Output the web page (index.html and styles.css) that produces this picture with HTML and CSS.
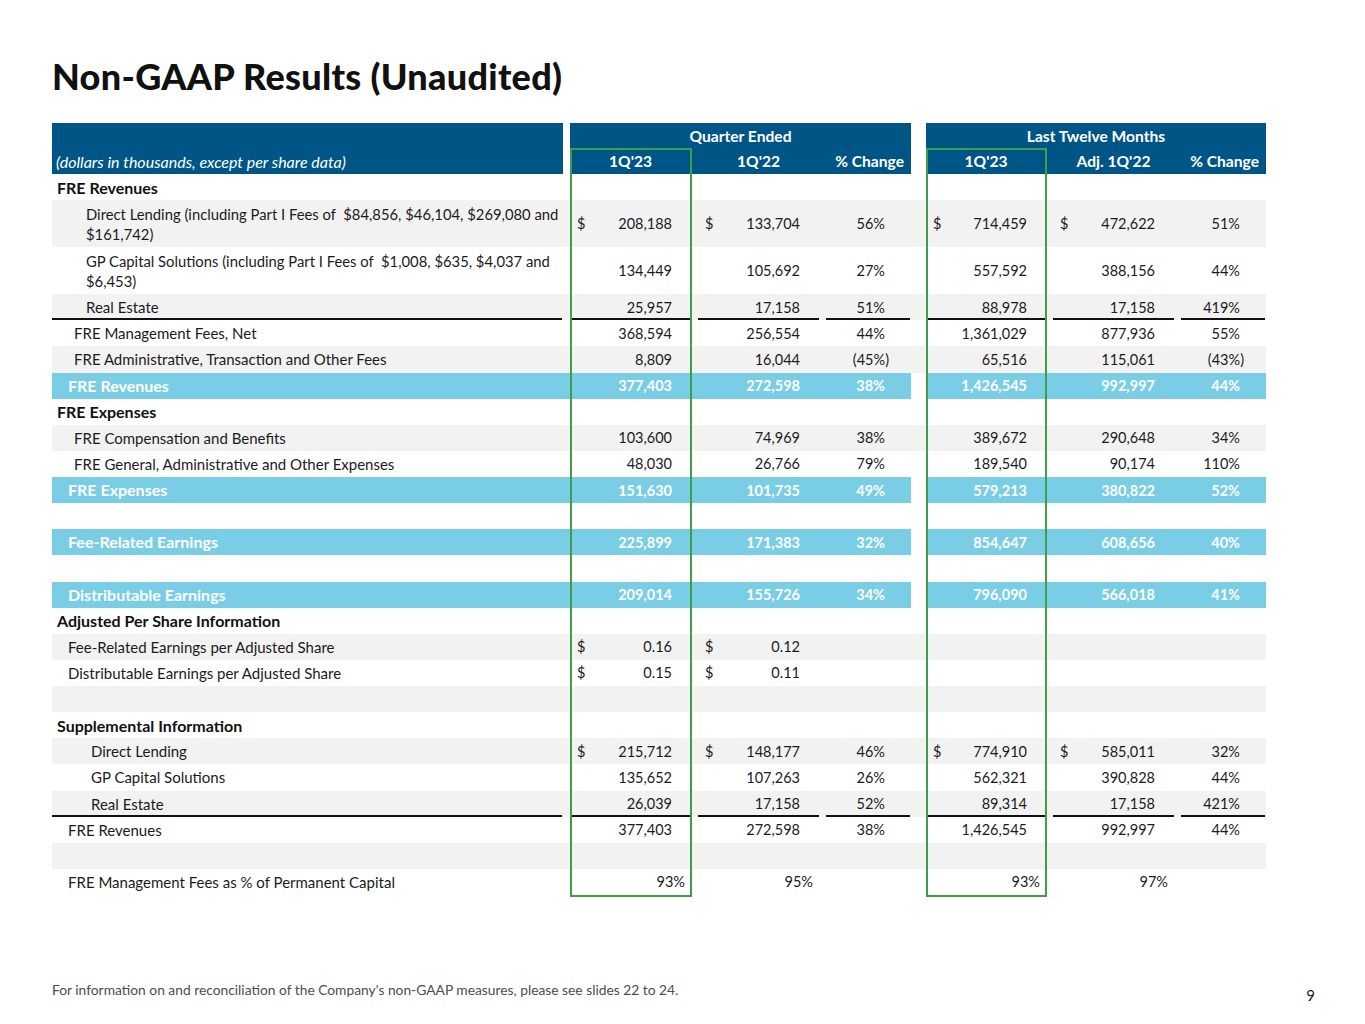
FILE: index.html
```html
<!DOCTYPE html>
<html lang="en">
<head>
<meta charset="utf-8">
<title>Non-GAAP Results (Unaudited)</title>
<link rel="stylesheet" href="styles.css">
</head>
<body>
<div class="slide">
  <h1 class="title">Non-GAAP Results (Unaudited)</h1>

  <div class="table">
    <div class="head">
      <div class="h-lab"><span class="note">(dollars in thousands, except per share data)</span></div>
      <div class="h-group g1">Quarter Ended</div>
      <div class="h-group g2">Last Twelve Months</div>
      <div class="h-col c1">1Q'23</div>
      <div class="h-col c2">1Q'22</div>
      <div class="h-col c3 pct">% Change</div>
      <div class="h-col c5">1Q'23</div>
      <div class="h-col c6">Adj. 1Q'22</div>
      <div class="h-col c7 pct">% Change</div>
    </div>

    <div class="row sec"><div class="lab i0">FRE Revenues</div><div class="n"></div><div class="n"></div><div class="p"></div><div class="sp"></div><div class="n"></div><div class="n"></div><div class="p"></div></div>

    <div class="row gray tall"><div class="lab i3">Direct Lending (including Part I Fees of &nbsp;$84,856, $46,104, $269,080 and<br>$161,742)</div><div class="n"><span class="cur">$</span>208,188</div><div class="n"><span class="cur">$</span>133,704</div><div class="p">56%</div><div class="sp"></div><div class="n"><span class="cur">$</span>714,459</div><div class="n"><span class="cur">$</span>472,622</div><div class="p">51%</div></div>

    <div class="row tall"><div class="lab i3">GP Capital Solutions (including Part I Fees of &nbsp;$1,008, $635, $4,037 and<br>$6,453)</div><div class="n">134,449</div><div class="n">105,692</div><div class="p">27%</div><div class="sp"></div><div class="n">557,592</div><div class="n">388,156</div><div class="p">44%</div></div>

    <div class="row gray ul"><div class="lab i3">Real Estate</div><div class="n">25,957</div><div class="n">17,158</div><div class="p">51%</div><div class="sp"></div><div class="n">88,978</div><div class="n">17,158</div><div class="p">419%</div></div>

    <div class="row"><div class="lab i2">FRE Management Fees, Net</div><div class="n">368,594</div><div class="n">256,554</div><div class="p">44%</div><div class="sp"></div><div class="n">1,361,029</div><div class="n">877,936</div><div class="p">55%</div></div>

    <div class="row gray"><div class="lab i2">FRE Administrative, Transaction and Other Fees</div><div class="n">8,809</div><div class="n">16,044</div><div class="p neg">(45%)</div><div class="sp"></div><div class="n">65,516</div><div class="n">115,061</div><div class="p neg">(43%)</div></div>

    <div class="row blue"><div class="lab i1">FRE Revenues</div><div class="n">377,403</div><div class="n">272,598</div><div class="p">38%</div><div class="sp"></div><div class="n">1,426,545</div><div class="n">992,997</div><div class="p">44%</div></div>

    <div class="row sec"><div class="lab i0">FRE Expenses</div><div class="n"></div><div class="n"></div><div class="p"></div><div class="sp"></div><div class="n"></div><div class="n"></div><div class="p"></div></div>

    <div class="row gray"><div class="lab i2">FRE Compensation and Benefits</div><div class="n">103,600</div><div class="n">74,969</div><div class="p">38%</div><div class="sp"></div><div class="n">389,672</div><div class="n">290,648</div><div class="p">34%</div></div>

    <div class="row"><div class="lab i2">FRE General, Administrative and Other Expenses</div><div class="n">48,030</div><div class="n">26,766</div><div class="p">79%</div><div class="sp"></div><div class="n">189,540</div><div class="n">90,174</div><div class="p">110%</div></div>

    <div class="row blue"><div class="lab i1">FRE Expenses</div><div class="n">151,630</div><div class="n">101,735</div><div class="p">49%</div><div class="sp"></div><div class="n">579,213</div><div class="n">380,822</div><div class="p">52%</div></div>

    <div class="row"></div>

    <div class="row blue"><div class="lab i1">Fee-Related Earnings</div><div class="n">225,899</div><div class="n">171,383</div><div class="p">32%</div><div class="sp"></div><div class="n">854,647</div><div class="n">608,656</div><div class="p">40%</div></div>

    <div class="row"></div>

    <div class="row blue"><div class="lab i1">Distributable Earnings</div><div class="n">209,014</div><div class="n">155,726</div><div class="p">34%</div><div class="sp"></div><div class="n">796,090</div><div class="n">566,018</div><div class="p">41%</div></div>

    <div class="row sec"><div class="lab i0">Adjusted Per Share Information</div></div>

    <div class="row gray"><div class="lab i1">Fee-Related Earnings per Adjusted Share</div><div class="n"><span class="cur">$</span>0.16</div><div class="n"><span class="cur">$</span>0.12</div></div>

    <div class="row"><div class="lab i1">Distributable Earnings per Adjusted Share</div><div class="n"><span class="cur">$</span>0.15</div><div class="n"><span class="cur">$</span>0.11</div></div>

    <div class="row gray"></div>

    <div class="row sec"><div class="lab i0">Supplemental Information</div></div>

    <div class="row gray"><div class="lab i4">Direct Lending</div><div class="n"><span class="cur">$</span>215,712</div><div class="n"><span class="cur">$</span>148,177</div><div class="p">46%</div><div class="sp"></div><div class="n"><span class="cur">$</span>774,910</div><div class="n"><span class="cur">$</span>585,011</div><div class="p">32%</div></div>

    <div class="row"><div class="lab i4">GP Capital Solutions</div><div class="n">135,652</div><div class="n">107,263</div><div class="p">26%</div><div class="sp"></div><div class="n">562,321</div><div class="n">390,828</div><div class="p">44%</div></div>

    <div class="row gray ul"><div class="lab i4">Real Estate</div><div class="n">26,039</div><div class="n">17,158</div><div class="p">52%</div><div class="sp"></div><div class="n">89,314</div><div class="n">17,158</div><div class="p">421%</div></div>

    <div class="row"><div class="lab i1">FRE Revenues</div><div class="n">377,403</div><div class="n">272,598</div><div class="p">38%</div><div class="sp"></div><div class="n">1,426,545</div><div class="n">992,997</div><div class="p">44%</div></div>

    <div class="row gray"></div>

    <div class="row last"><div class="lab i1">FRE Management Fees as % of Permanent Capital</div><div class="n">93%</div><div class="n">95%</div><div class="p"></div><div class="sp"></div><div class="n">93%</div><div class="n">97%</div><div class="p"></div></div>

    <div class="hl hl1"></div>
    <div class="hl hl2"></div>
  </div>

  <footer class="foot">
    <span class="foot-note">For information on and reconciliation of the Company's non-GAAP measures, please see slides 22 to 24.</span>
    <span class="page">9</span>
  </footer>
</div>
</body>
</html>
```

FILE: styles.css
```css
html, body {
  margin: 0;
  padding: 0;
  background: #ffffff;
}

.slide {
  width: 1365px;
  height: 1024px;
  box-sizing: border-box;
  padding: 0 0 0 52px;
  display: flex;
  flex-direction: column;
  font-family: Lato, "Noto Sans", "Liberation Sans", sans-serif;
  color: #1b1b1b;
}

.title {
  flex-shrink: 0;
  margin: 0;
  padding-top: 54px;
  height: 123px;
  box-sizing: border-box;
  font-size: 36px;
  line-height: 44px;
  font-weight: 900;
  letter-spacing: 0.3px;
  color: #111111;
}

.table {
  flex-shrink: 0;
  position: relative;
  width: 1214px;
  font-size: 14.5px;
}

/* ---------- header ---------- */
.head {
  display: grid;
  grid-template-columns: 518px 128px 128px 85px 15px 127px 128px 85px;
  grid-template-rows: 25px 26px;
  color: #ffffff;
  font-weight: 700;
  font-size: 15.6px;
}

.h-lab {
  grid-row: 1 / 3;
  grid-column: 1;
  margin-right: 7px;
  background: #005587;
  display: flex;
  align-items: flex-end;
  padding: 0 0 3px 4px;
}

.note {
  font-style: italic;
  font-weight: 400;
  font-size: 16px;
}

.h-group {
  background: #005587;
  display: flex;
  align-items: center;
  justify-content: center;
  padding-top: 1px;
}

.g1 { grid-column: 2 / 5; grid-row: 1; }
.g2 { grid-column: 6 / 9; grid-row: 1; }

.h-col {
  background: #005587;
  grid-row: 2;
  display: flex;
  align-items: center;
  justify-content: center;
  padding-right: 7px;
}

.h-col.pct {
  justify-content: flex-end;
  padding-right: 7px;
}

.c1 { grid-column: 2; }
.c2 { grid-column: 3; }
.c3 { grid-column: 4; }
.c5 { grid-column: 6; }
.c6 { grid-column: 7; }
.c7 { grid-column: 8; }

/* ---------- body rows ---------- */
.row {
  display: grid;
  grid-template-columns: 518px 128px 128px 85px 15px 127px 128px 85px;
  height: 26.13px;
  align-items: stretch;
}

.row.tall {
  height: 47px;
  line-height: 20px;
}

.row.gray {
  background: #f2f2f2;
}

.lab,
.n,
.p {
  display: flex;
  align-items: center;
  white-space: nowrap;
}

.lab {
  font-size: 15px;
}

.tall .lab {
  font-size: 14.8px;
}

.n {
  justify-content: flex-end;
  padding: 0 26px 0 7px;
}

.n .cur {
  margin-right: auto;
}

.p {
  justify-content: flex-end;
  padding-right: 26px;
}

.p.neg {
  padding-right: 22px;
}

.last .n {
  padding-right: 13px;
}

.i0 { padding-left: 5px; font-weight: 700; }
.i1 { padding-left: 16px; }
.i2 { padding-left: 22px; }
.i3 { padding-left: 34px; }
.i4 { padding-left: 39px; }

.sec .lab {
  color: #111111;
  font-size: 16px;
}

/* highlighted total rows */
.row.blue {
  color: #ffffff;
  font-weight: 700;
}

.row.blue .lab {
  font-size: 16px;
  padding-bottom: 1px;
}

.row.blue .lab,
.row.blue .n,
.row.blue .p {
  background: #79cde4;
}

/* subtotal underlines */
.row.ul .lab,
.row.ul .n {
  background-image: linear-gradient(#111111, #111111);
  background-repeat: no-repeat;
  background-position: left bottom;
  background-size: calc(100% - 7px) 2px;
}

.row.ul .lab {
  background-size: calc(100% - 8px) 2px;
}

.row.ul .p {
  background-image: linear-gradient(#111111, #111111);
  background-repeat: no-repeat;
  background-position: left bottom;
  background-size: calc(100% - 1px) 2px;
}

/* green highlight boxes over the current-period columns */
.hl {
  position: absolute;
  top: 25px;
  width: 122px;
  height: 749px;
  box-sizing: border-box;
  border: 2px solid #3e9f48;
  pointer-events: none;
}

.hl1 { left: 518px; }
.hl2 { left: 874px; width: 121px; }

/* ---------- footer ---------- */
.foot {
  margin-top: auto;
  display: flex;
  align-items: flex-end;
  justify-content: space-between;
  padding: 0 50px 20px 0;
}

.foot-note {
  font-size: 13.8px;
  color: #4d4d4d;
  padding-bottom: 6px;
}

.page {
  font-size: 15px;
  color: #222222;
}
```
